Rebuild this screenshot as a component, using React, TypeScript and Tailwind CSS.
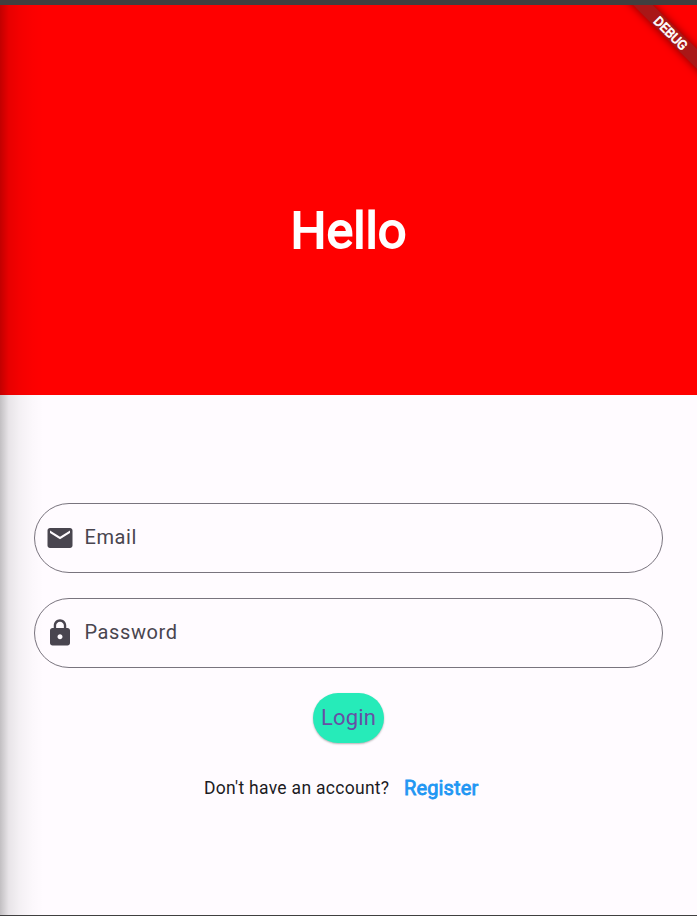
import type { ReactNode } from "react";

function DebugBanner() {
  return (
    <div className="absolute top-0 right-0 h-24 w-24 overflow-hidden">
      <div className="absolute top-[21px] left-0 flex h-[14px] w-[140px] rotate-45 items-center justify-center bg-[#a91717] text-[13px] leading-none text-white shadow-[0_0_8px_rgba(0,0,0,0.5)] [-webkit-text-stroke:0.7px_#fff]">
        DEBUG
      </div>
    </div>
  );
}

function Field({ label, children }: { label: string; children: ReactNode }) {
  return (
    <div className="flex h-[70px] items-center rounded-full border border-[#79747e] pl-[9.5px]">
      <svg viewBox="0 0 24 24" className="h-[30px] w-[30px] fill-[#49454f]">
        {children}
      </svg>
      <span className="ml-[10px] pb-[2px] text-[20px] leading-6 tracking-[0.6px] text-[#49454f]">{label}</span>
    </div>
  );
}

export default function App() {
  return (
    <div className="relative flex h-[916px] w-[697px] flex-col overflow-hidden border-t-[5px] border-b border-[#404040] bg-[#fffbff] font-[Roboto,sans-serif]">
      <header className="flex h-[390px] shrink-0 items-center justify-center bg-[#ff0000] pt-[62px]">
        <h1 className="text-[50.5px] leading-[60px] font-normal text-white [-webkit-text-stroke:1.8px_#fff]">Hello</h1>
      </header>

      <main className="flex flex-col px-[34px] pt-[108px]">
        <div className="flex flex-col gap-[25px]">
          <Field label="Email">
            <path d="M20 4H4c-1.1 0-1.99.9-1.99 2L2 18c0 1.1.9 2 2 2h16c1.1 0 2-.9 2-2V6c0-1.1-.9-2-2-2zm0 4l-8 5-8-5V6l8 5 8-5v2z" />
          </Field>
          <Field label="Password">
            <path d="M18 8h-1V6c0-2.76-2.24-5-5-5S7 3.24 7 6v2H6c-1.1 0-2 .9-2 2v10c0 1.1.9 2 2 2h12c1.1 0 2-.9 2-2V10c0-1.1-.9-2-2-2zm-6 9c-1.1 0-2-.9-2-2s.9-2 2-2 2 .9 2 2-.9 2-2 2zm3.1-9H8.9V6c0-1.71 1.39-3.1 3.1-3.1 1.71 0 3.1 1.39 3.1 3.1v2z" />
          </Field>
        </div>

        <button className="mt-[25px] flex h-[50px] w-[71px] items-center justify-center self-center rounded-full bg-[#26ebb9] pb-[2px] text-[22px] tracking-[0.2px] text-[#6750a4] shadow-[0_1px_2px_rgba(0,0,0,0.3)]">
          Login
        </button>

        <div className="mt-[31px] flex h-7 items-center pl-[170px]">
          <span className="text-[17.5px] tracking-[0.29px] whitespace-nowrap text-[#1c1b1f]">Don't have an account?</span>
          <span className="ml-[14.5px] text-[20px] tracking-[0.15px] text-[#2196f3] [-webkit-text-stroke:0.8px_#2196f3]">Register</span>
        </div>
      </main>

      <div className="pointer-events-none absolute inset-y-0 left-0 w-11 bg-[linear-gradient(to_right,rgba(0,0,0,0.24),rgba(0,0,0,0.09)_20%,rgba(0,0,0,0.045)_45%,rgba(0,0,0,0.012)_75%,transparent)]" />
      <DebugBanner />
    </div>
  );
}
